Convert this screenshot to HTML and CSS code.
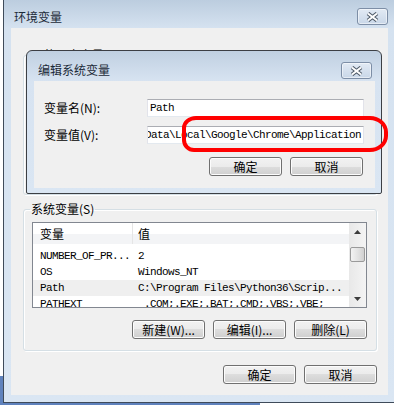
FILE: index.html
```html
<!DOCTYPE html>
<html lang="zh-CN">
<head>
    <meta charset="UTF-8">
    <meta name="viewport" content="width=device-width, initial-scale=1.0">
    <title>环境变量</title>
    <link rel="stylesheet" href="styles.css">
</head>
<body>
    <div class="win">
        <div class="titlebar">
            <span class="title">环境变量</span>
            <span class="close-btn">
                <svg width="13" height="10" viewBox="0 0 13 10"><path d="M2 1.5 L11 8.5 M11 1.5 L2 8.5" stroke="#4f5a68" stroke-width="4" fill="none"/><path d="M2 1.5 L11 8.5 M11 1.5 L2 8.5" stroke="#fff" stroke-width="2" fill="none"/></svg>
            </span>
        </div>
        <div class="client">
            <fieldset class="group user-group">
                <legend>ai 的用户变量(U)</legend>
            </fieldset>
            <fieldset class="group sys-group">
                <legend>系统变量(S)</legend>
                <div class="list">
                    <div class="list-main">
                        <div class="list-head">
                            <span class="col-name">变量</span>
                            <span class="col-value">值</span>
                        </div>
                        <div class="list-rows">
                            <div class="list-row"><span class="col-name">NUMBER_OF_PR...</span><span class="col-value">2</span></div>
                            <div class="list-row"><span class="col-name">OS</span><span class="col-value">Windows_NT</span></div>
                            <div class="list-row selected"><span class="col-name">Path</span><span class="col-value">C:\Program Files\Python36\Scrip...</span></div>
                            <div class="list-row"><span class="col-name">PATHEXT</span><span class="col-value"> .COM;.EXE;.BAT;.CMD;.VBS;.VBE;</span></div>
                        </div>
                    </div>
                    <div class="scrollbar">
                        <div class="sb-arrow">
                            <svg width="7" height="4" viewBox="0 0 7 4"><path d="M0 4 L3.5 0 L7 4 Z" fill="#3c3c3c"/></svg>
                        </div>
                        <div class="sb-thumb"></div>
                        <div class="sb-track"></div>
                        <div class="sb-arrow">
                            <svg width="7" height="4" viewBox="0 0 7 4"><path d="M0 0 L7 0 L3.5 4 Z" fill="#3c3c3c"/></svg>
                        </div>
                    </div>
                </div>
                <div class="btn-row">
                    <button type="button" class="btn">新建(W)...</button>
                    <button type="button" class="btn">编辑(I)...</button>
                    <button type="button" class="btn">删除(L)</button>
                </div>
            </fieldset>
            <div class="btn-row main-btns">
                <button type="button" class="btn">确定</button>
                <button type="button" class="btn">取消</button>
            </div>
        </div>

        <div class="dialog">
            <div class="titlebar dialog-titlebar">
                <span class="title">编辑系统变量</span>
                <span class="close-btn">
                    <svg width="13" height="10" viewBox="0 0 13 10"><path d="M2 1.5 L11 8.5 M11 1.5 L2 8.5" stroke="#4f5a68" stroke-width="4" fill="none"/><path d="M2 1.5 L11 8.5 M11 1.5 L2 8.5" stroke="#fff" stroke-width="2" fill="none"/></svg>
                </span>
            </div>
            <div class="client dialog-client">
                <div class="form-row">
                    <label class="form-label" for="varName">变量名(N):</label>
                    <div class="textbox" id="varName"><span>Path</span></div>
                </div>
                <div class="form-row">
                    <label class="form-label" for="varValue">变量值(V):</label>
                    <div class="textbox scrolled" id="varValue"><span>Data\Local\Google\Chrome\Application</span></div>
                </div>
                <div class="btn-row dialog-btns">
                    <button type="button" class="btn">确定</button>
                    <button type="button" class="btn">取消</button>
                </div>
            </div>
            <!-- hand drawn mark around the value -->
            <div class="red-mark"></div>
        </div>
    </div>
</body>
</html>
```

FILE: styles.css
```css
body {
    margin: 0;
    width: 394px;
    height: 405px;
    overflow: hidden;
    font-family: "Noto Sans CJK SC", sans-serif;
    font-size: 12px;
    color: #000;
    background:
        linear-gradient(#5f82bd, #5f82bd) 0 376px / 3px 29px no-repeat,
        linear-gradient(#5f82bd, #5f82bd) 0 403px / 260px 2px no-repeat,
        #fff;
}
.win {
    position: relative;
    margin-left: 3px;
    width: 391px;
    height: 402px;
    border-left: 1px solid #3f4b5a;
    border-bottom: 1px solid #3f4b5a;
    background: linear-gradient(#bccddf, #d5e2f0 28px, #dae6f3);
}
.titlebar {
    display: flex;
    justify-content: space-between;
    align-items: flex-start;
    height: 28px;
    box-sizing: border-box;
    padding: 8px 7px 0 10px;
}
.title {
    line-height: 18px;
    color: #1c2a38;
}
.close-btn {
    display: flex;
    justify-content: center;
    align-items: center;
    width: 29px;
    height: 15px;
    border: 1px solid #7d8ea6;
    border-radius: 3px;
    background: linear-gradient(#e2eaf4, #c9d7e8);
    box-shadow: inset 0 0 0 1px rgba(255, 255, 255, 0.5);
}
.client {
    margin: 0 7px;
    height: 367px;
    box-sizing: border-box;
    padding: 20px 11px 0 12px;
    background: #f0f0f0;
}
.group {
    margin: 0;
    padding: 6px 9px 0 8px;
    border: 1px solid #d5dfe5;
    border-radius: 3px;
    box-shadow: inset 1px 1px 0 #fff, 1px 1px 0 #fff;
}
.group legend {
    margin-left: -2px;
    padding: 0 1px;
    line-height: 14px;
}
.user-group {
    height: 147px;
    box-sizing: border-box;
}
.sys-group {
    margin-top: 7px;
    padding-bottom: 11px;
}
.list {
    display: flex;
    width: 335px;
    height: 86px;
    box-sizing: border-box;
    border: 1px solid #828790;
    background: #fff;
    overflow: hidden;
}
.list-main {
    flex: 1;
    overflow: hidden;
}
.list-head {
    display: flex;
    height: 21px;
    line-height: 21px;
    background: linear-gradient(#fff 50%, #f3f4f6 50%);
}
.list-head .col-name {
    width: 92px;
    padding-left: 7px;
    border-right: 1px solid #e5e5e5;
}
.list-head .col-value {
    padding-left: 5px;
}
.list-rows {
    padding-top: 4px;
    font-family: "Liberation Mono", monospace;
    font-size: 11px;
    letter-spacing: -0.6px;
}
.list-row {
    display: flex;
    height: 16px;
    line-height: 16px;
    white-space: pre;
}
.list-row .col-name {
    width: 93px;
    padding-left: 7px;
    flex-shrink: 0;
}
.list-row .col-value {
    padding-left: 5px;
}
.list-row.selected {
    background: #efefef;
}
.scrollbar {
    display: flex;
    flex-direction: column;
    width: 17px;
    background: linear-gradient(90deg, #e8e8e8, #f4f4f4);
}
.sb-arrow {
    display: flex;
    justify-content: center;
    align-items: center;
    height: 17px;
}
.sb-thumb {
    height: 15px;
    margin: 7px 1px 0;
    border: 1px solid #9a9a9a;
    border-radius: 2px;
    box-sizing: border-box;
    background: linear-gradient(90deg, #f3f3f3, #e0e0e0 60%, #d0d0d0);
}
.sb-track {
    flex: 1;
}
.btn-row {
    display: flex;
    justify-content: flex-end;
    gap: 8px;
}
.sys-group .btn-row {
    margin-top: 12px;
}
.main-btns {
    margin-top: 14px;
}
.btn {
    width: 73px;
    height: 19px;
    padding: 0;
    border: 1px solid #707070;
    border-radius: 3px;
    background: linear-gradient(#f2f2f2, #ebebeb 50%, #dddddd 50%, #cfcfcf);
    box-shadow: inset 0 0 0 1px #fcfcfc;
    font-family: "Noto Sans CJK SC", sans-serif;
    font-size: 12px;
    line-height: 16px;
    color: #000;
}
.dialog {
    position: absolute;
    left: 22px;
    top: 50px;
    width: 356px;
    height: 144px;
    box-sizing: border-box;
    border: 1px solid #3c3f44;
    border-radius: 6px 6px 2px 2px;
    background: linear-gradient(#c0d0e1, #d7e3f1 30px, #dae6f3);
}
.dialog-titlebar {
    height: 30px;
    padding: 11px 9px 0 11px;
}
.dialog-titlebar .title {
    line-height: 16px;
}
.dialog-client {
    margin: 0 6px 0 7px;
    height: 107px;
    padding: 18px 11px 0 10px;
}
.form-row {
    display: flex;
    align-items: center;
    margin-bottom: 9px;
}
.form-label {
    width: 103px;
    line-height: 18px;
}
.textbox {
    display: flex;
    flex: 1;
    height: 18px;
    box-sizing: border-box;
    padding: 0 2px;
    border: 1px solid #e2e3ea;
    border-top-color: #abadb3;
    border-bottom-color: #e3e9ef;
    background: #fff;
    overflow: hidden;
    white-space: nowrap;
    font-family: "Liberation Mono", monospace;
    font-size: 11px;
    letter-spacing: -0.6px;
    line-height: 16px;
}
.textbox.scrolled {
    justify-content: flex-end;
}
.dialog-btns {
    margin-top: 13px;
    margin-right: 1px;
}
.red-mark {
    position: absolute;
    left: 155px;
    top: 65px;
    width: 206px;
    height: 36px;
    box-sizing: border-box;
    border: 4px solid #ff0000;
    border-radius: 14px 18px 18px 12px / 12px 16px 16px 12px;
}
```
